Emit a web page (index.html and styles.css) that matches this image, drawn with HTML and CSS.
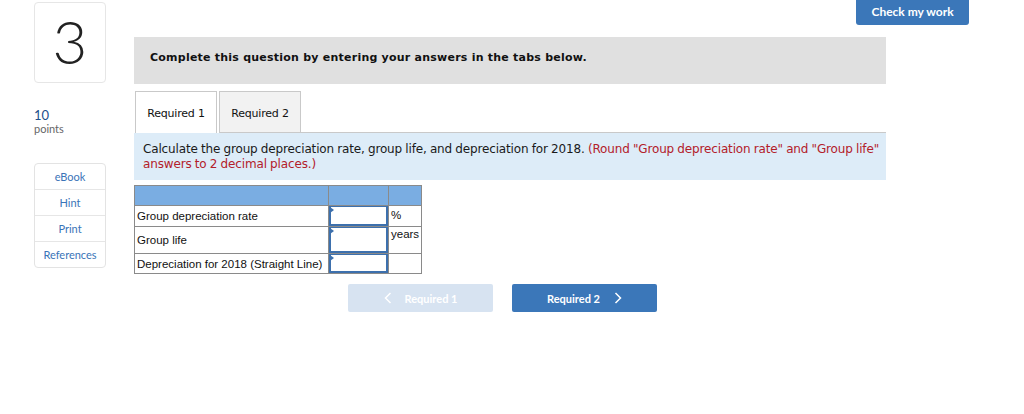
FILE: index.html
```html
<!DOCTYPE html>
<html>
<head>
<meta charset="utf-8">
<link rel="stylesheet" href="styles.css">
</head>
<body>
<div class="page">
  <aside class="side">
    <div class="qnum">3</div>
    <div class="pts"><div class="pts-val">10</div><div class="pts-lbl">points</div></div>
    <nav class="tools">
      <div class="tool">eBook</div>
      <div class="tool">Hint</div>
      <div class="tool">Print</div>
      <div class="tool">References</div>
    </nav>
  </aside>
  <div class="right">
    <div class="topbar"><button class="check">Check my work</button></div>
    <main class="main">
      <div class="banner">Complete this question by entering your answers in the tabs below.</div>
      <div class="tabs">
        <div class="tab active">Required 1</div>
        <div class="tab">Required 2</div>
        <div class="tabline"></div>
      </div>
      <div class="instr">Calculate the group depreciation rate, group life, and depreciation for 2018. <span class="red">(Round "Group depreciation rate" and "Group life" answers to 2 decimal places.)</span></div>
      <table class="grid">
        <tr class="head"><td class="c1"></td><td class="c2"></td><td class="c3"></td></tr>
        <tr class="r1"><td class="c1">Group depreciation rate</td><td class="c2 inp"><div class="box"></div></td><td class="c3 unit">%</td></tr>
        <tr class="r2"><td class="c1">Group life</td><td class="c2 inp"><div class="box"></div></td><td class="c3 unit">years</td></tr>
        <tr class="r3"><td class="c1">Depreciation for 2018 (Straight Line)</td><td class="c2 inp"><div class="box"></div></td><td class="c3 unit"></td></tr>
      </table>
      <div class="navbtns">
        <button class="nb disabled"><svg class="chev" width="8" height="12" viewBox="0 0 8 12"><polyline points="6.5,1 1.5,6 6.5,11" fill="none" stroke="#fff" stroke-width="1.5"/></svg>Required 1</button>
        <button class="nb">Required 2<svg class="chev r" width="8" height="12" viewBox="0 0 8 12"><polyline points="1.5,1 6.5,6 1.5,11" fill="none" stroke="#fff" stroke-width="1.5"/></svg></button>
      </div>
    </main>
  </div>
</div>
</body>
</html>
```
FILE: styles.css
```css
* { box-sizing: border-box; }
html, body { margin: 0; padding: 0; background: #fff; }
body { width: 1024px; height: 414px; overflow: hidden; font-family: "Open Sans", "Liberation Sans", sans-serif; }
.page { display: flex; padding-left: 34px; gap: 28px; }
.side { width: 72px; display: flex; flex-direction: column; }
.qnum {
  margin-top: 2px; height: 81px; border: 1px solid #e6e6e6; border-radius: 4px;
  display: flex; align-items: center; justify-content: center;
  font-family: Lato, sans-serif; font-weight: 300; font-size: 60px; color: #222; line-height: 1;
  padding-bottom: 4px;
}
.pts { margin-top: 25px; font-family: Lato, sans-serif; }
.pts-val { font-size: 13px; color: #1d4f8c; line-height: 14px; }
.pts-lbl { font-size: 11px; color: #666; line-height: 14px; }
.tools { margin-top: 27px; border: 1px solid #e3e3e3; border-radius: 4px; }
.tool {
  height: 26px; display: flex; align-items: center; justify-content: center;
  font-family: Lato, sans-serif; font-size: 11px; color: #3a74b8; border-top: 1px solid #e6e6e6;
}
.tool:first-child { border-top: none; height: 25px; }
.right { width: 835px; display: flex; flex-direction: column; }
.topbar { display: flex; justify-content: flex-end; height: 25px; }
.check {
  width: 113px; height: 25px; border: none; border-radius: 0 0 3px 3px; background: #3b77b9; color: #fff;
  font-family: Lato, sans-serif; font-weight: 700; font-size: 12px; padding: 0; padding-bottom: 3px;
}
.main { width: 752px; margin-top: 12px; }
.banner {
  height: 47px; background: #e0e0e0; padding-left: 16px; display: flex; align-items: center;
  font-family: "DejaVu Sans", Verdana, sans-serif; font-weight: 700; font-size: 11px; color: #111;
  padding-bottom: 6px; letter-spacing: 0.23px;
}
.tabs { display: flex; margin-top: 7px; height: 42px; align-items: flex-end; }
.tab {
  width: 82px; height: 42px; border: 1px solid #c9c9c9; background: #f2f2f2;
  display: flex; align-items: center; justify-content: center;
  font-family: "DejaVu Sans", Verdana, sans-serif; font-size: 11px; color: #111; margin-left: 2px;
  padding-top: 3px; letter-spacing: -0.2px;
}
.tab.active { margin-left: 1px; background: #fff; border-bottom: none; padding-top: 2px; }
.tabline { flex: 1; border-bottom: 1px solid #c9c9c9; height: 1px; }
.instr {
  background: #ddecf8; height: 47px; padding: 9px 4px 0 9px;
  font-family: "DejaVu Sans", Verdana, sans-serif; font-size: 12px; line-height: 15px; color: #1a1a1a;
  letter-spacing: -0.15px; word-spacing: -0.4px;
}
.red { color: #b3202a; }
.grid {
  margin-top: 5px; border-collapse: collapse; border: 1px solid #7d7d7d;
  font-family: "Liberation Sans", Arial, sans-serif; font-size: 11.5px; color: #111;
}
.grid td { border: 1px solid #8a8a8a; padding: 0 2px; }
.c1 { width: 194px; }
.c2 { width: 60px; }
.c3 { width: 33px; }
.head td { background: #7aade2; height: 20px; }
.r1 td { height: 21px; }
.r2 td { height: 27px; }
.r3 td { height: 20px; }
.inp { padding: 0 !important; position: relative; }
.box { position: relative; border: 2px solid #3d70ad; border-top-width: 1px; }
.r1 .box { height: 20px; }
.r2 .box { height: 26px; }
.r3 .box { height: 19px; }
.box::before {
  content: ""; position: absolute; left: -1px; top: 0; width: 0; height: 0;
  border-top: 3px solid transparent; border-bottom: 3px solid transparent; border-left: 4px solid #3d70ad;
}
.unit { vertical-align: top; padding-top: 1px !important; }
.r1 .unit { padding-top: 3px !important; }
.navbtns { display: flex; gap: 19px; margin-top: 10px; padding-left: 214px; }
.nb {
  width: 145px; height: 28px; border: none; border-radius: 2px; background: #3b77b9; color: #fff;
  font-family: Lato, sans-serif; font-weight: 700; font-size: 11px; padding: 0;
  display: flex; align-items: center; justify-content: center;
}
.nb.disabled { background: #d7e3f1; }
.chev { display: block; margin-right: 13px; }
.chev.r { margin-right: 0; margin-left: 14px; }
```
